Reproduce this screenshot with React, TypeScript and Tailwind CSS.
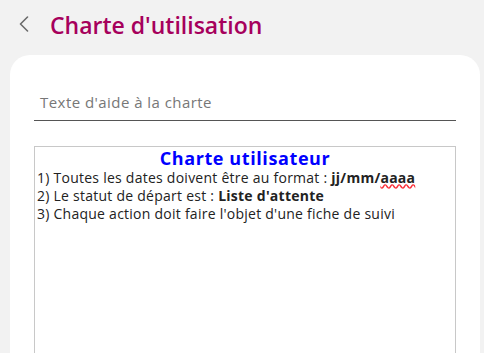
import React from 'react';

const Chevron = () => (
  <svg width="10" height="16" viewBox="0 0 10 16" fill="none" className="block">
    <polyline points="8.5,1 1.5,8 8.5,15" stroke="#6b6b6b" strokeWidth="1.6" strokeLinecap="round" strokeLinejoin="round" />
  </svg>
);

export default function App() {
  return (
    <div className="h-[353px] w-[484px] overflow-hidden bg-[#f2f2f2] font-['Open_Sans',sans-serif]">
      <header className="flex h-[55px] items-start pl-[19px] pt-[16px]">
        <Chevron />
        <h1 className="ml-[21px] -mt-[8px] text-[23px] font-semibold text-[#a6005c]">
          Charte d'utilisation
        </h1>
      </header>
      <main className="ml-[10px] h-[298px] w-[470px] rounded-t-[20px] bg-white px-[24px] pt-[36px]">
        <div className="border-b border-[#555] pb-[6px] pl-[6px] text-[15px] tracking-[0.45px] text-[#777]">
          Texte d'aide à la charte
        </div>
        <div className="mt-[25px] h-[240px] border border-[#c8c8c8] px-[2px] text-[14px] leading-[18px] tracking-[0.25px] text-[#222]">
          <p className="text-center text-[18px] font-bold leading-[22px] tracking-[0.6px] text-[#0000ff]">Charte utilisateur</p>
          <p>
            1) Toutes les dates doivent être au format : <b>jj/mm/<span className="underline decoration-wavy decoration-red-500">aaaa</span></b>
          </p>
          <p>
            2) Le statut de départ est : <b>Liste d'attente</b>
          </p>
          <p>3) Chaque action doit faire l'objet d'une fiche de suivi</p>
        </div>
      </main>
    </div>
  );
}
